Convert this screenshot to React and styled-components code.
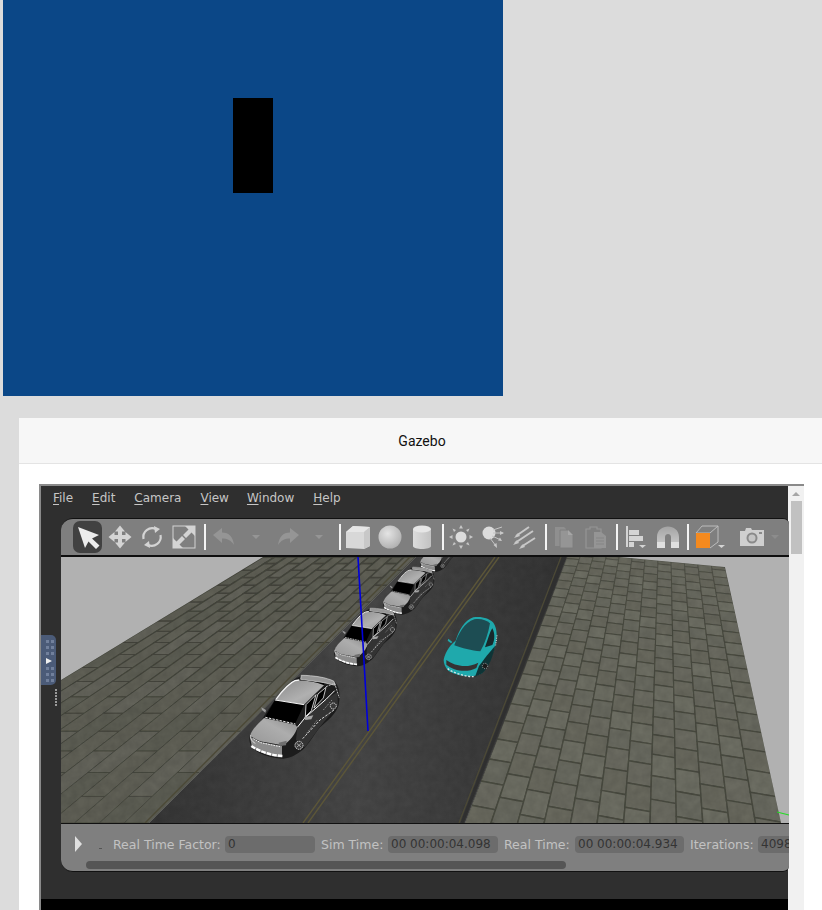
import React from 'react';
import styled, { createGlobalStyle } from 'styled-components';

const GlobalStyle = createGlobalStyle`
  html, body {
    margin: 0;
    padding: 0;
    background: #dcdcdc;
    overflow: hidden;
  }
  #root {
    width: 822px;
    height: 910px;
    overflow: hidden;
  }
`;

const Page = styled.div`
  width: 822px;
  height: 910px;
  overflow: hidden;
  background: #dcdcdc;
`;

const VideoBox = styled.div`
  width: 500px;
  height: 396px;
  margin-left: 3px;
  background: #0b4787;
  display: flex;
  justify-content: center;
  padding-top: 98px;
  box-sizing: border-box;
`;

const VideoMark = styled.div`
  width: 40px;
  height: 95px;
  background: #000;
`;

const Modal = styled.div`
  width: 806px;
  margin: 22px 0 0 19px;
  background: #fff;
  border-radius: 3px 0 0 0;
`;

const ModalHeader = styled.div`
  height: 45px;
  display: flex;
  align-items: center;
  justify-content: center;
  background: #f7f7f7;
  border-bottom: 1px solid #e4e4e4;
  font: 14px Roboto, "Liberation Sans", sans-serif;
  color: #111;
`;

const ModalBody = styled.div`
  padding: 20px 0 0 20px;
  height: 470px;
  box-sizing: border-box;
`;

const GazeboWindow = styled.div`
  position: relative;
  width: 765px;
  height: 450px;
  box-sizing: border-box;
  border-top: 2px solid #8a8a8a;
  border-left: 2px solid #8a8a8a;
  display: flex;
  font-family: "DejaVu Sans", sans-serif;
`;

const Desktop = styled.div`
  width: 747px;
  flex: none;
  background: #2f2f2f;
`;

const MenuBar = styled.div`
  height: 32px;
  display: flex;
  align-items: center;
  padding: 0 0 8px 12px;
  box-sizing: border-box;
  font-size: 12px;
  color: #c6c6c6;
`;

const MenuItem = styled.span`
  margin-right: ${props => props.$gap}px;
  u {
    text-underline-offset: 2px;
  }
`;

const Panel = styled.div`
  width: 728px;
  margin-left: 20px;
  position: relative;
  z-index: 1;
  margin-right: -1px;
`;

const Toolbar = styled.div`
  height: 39px;
  box-sizing: border-box;
  display: flex;
  align-items: center;
  padding-left: 12px;
  background: #7f7f7f;
  border-top: 1px solid #111;
  border-bottom: 2px solid #0e0e0e;
  border-radius: 12px 6px 0 0;
`;

const SelectButton = styled.div`
  width: 29px;
  height: 32px;
  margin-right: 2px;
  display: flex;
  align-items: center;
  justify-content: center;
  background: #414141;
  border-radius: 7px;
`;

const Slot = styled.div`
  width: ${props => props.$w}px;
  flex: none;
  display: flex;
  align-items: center;
  justify-content: center;
`;

const Separator = styled.div`
  width: 2px;
  height: 26px;
  flex: none;
  margin: 0 ${props => props.$r ?? 2}px 0 ${props => props.$l ?? 4}px;
  background: #f4f4f4;
`;

const Scene = styled.div`
  height: 266px;
  overflow: hidden;
  svg {
    display: block;
  }
`;

const StatusBar = styled.div`
  height: 49px;
  box-sizing: border-box;
  background: #7f7f7f;
  border-top: 1px solid #111;
  border-bottom: 1px solid #111;
  border-radius: 0 0 6px 12px;
  overflow: hidden;
`;

const StatusRow = styled.div`
  height: 37px;
  padding: 3px 0 0 14px;
  box-sizing: border-box;
  display: flex;
  align-items: center;
  font-size: 12.5px;
  color: #c2c2c2;
  white-space: nowrap;
`;

const PlayArrow = styled.div`
  width: 0;
  height: 0;
  flex: none;
  border-left: 7px solid #e0e0e0;
  border-top: 8px solid transparent;
  border-bottom: 8px solid transparent;
`;

const TinyDot = styled.div`
  width: 3px;
  height: 1px;
  flex: none;
  margin: 9px 11px 0 17px;
  background: #555;
`;

const StatusLabel = styled.span`
  flex: none;
  width: ${props => props.$w}px;
`;

const StatusValue = styled.div`
  width: ${props => props.$w}px;
  height: 17px;
  flex: none;
  margin: 0 6px 0 ${props => props.$l}px;
  padding-left: 3px;
  box-sizing: border-box;
  line-height: 17px;
  font-size: 12px;
  background: #6c6c6c;
  border-radius: 4px;
  color: #343434;
`;

const HScroll = styled.div`
  width: 480px;
  height: 8px;
  margin-left: 25px;
  background: #555;
  border-radius: 4px;
`;

const BlackStrip = styled.div`
  height: 30px;
  margin-top: 27px;
  background: #000;
`;

const ScrollTrack = styled.div`
  width: 16px;
  flex: none;
  background: #f1f1f1;
  position: relative;
  z-index: 0;
  display: flex;
  flex-direction: column;
  align-items: center;
  padding-top: 6px;
  box-sizing: border-box;
`;

const ScrollUp = styled.div`
  width: 0;
  height: 0;
  border-left: 4px solid transparent;
  border-right: 4px solid transparent;
  border-bottom: 4px solid #a6a6a6;
`;

const ScrollThumb = styled.div`
  width: 11px;
  height: 53px;
  margin-top: 5px;
  background: #c1c1c1;
`;

const SideTab = styled.div`
  position: absolute;
  left: 0;
  top: 149px;
  width: 15px;
  height: 50px;
  box-sizing: border-box;
  padding: 5px 0 0 5px;
  background: #4b5b78;
  border-radius: 0 5px 5px 0;
  display: grid;
  grid-template-columns: 3px 3px;
  grid-auto-rows: min-content;
  column-gap: 2px;
  row-gap: 3px;
  z-index: 2;
`;

const TabDot = styled.i`
  height: 3px;
  background: #71809c;
`;

const TabArrow = styled.i`
  grid-column: span 2;
  width: 0;
  height: 0;
  border-left: 6px solid #f0f0f0;
  border-top: 3px solid transparent;
  border-bottom: 3px solid transparent;
`;

const Grip = styled.div`
  position: absolute;
  left: 14px;
  top: 203px;
  width: 2px;
  height: 18px;
  background: repeating-linear-gradient(#9a9a9a 0 2px, transparent 2px 3px);
  z-index: 2;
`;

/* maps the unit square on a four point quad, the way the ground looks in the camera */
const homography = ([p0, p1, p2, p3]) => {
  const dx1 = p1[0] - p2[0];
  const dx2 = p3[0] - p2[0];
  const sx = p0[0] - p1[0] + p2[0] - p3[0];
  const dy1 = p1[1] - p2[1];
  const dy2 = p3[1] - p2[1];
  const sy = p0[1] - p1[1] + p2[1] - p3[1];
  const den = dx1 * dy2 - dx2 * dy1;
  const g = (sx * dy2 - dx2 * sy) / den;
  const h = (dx1 * sy - sx * dy1) / den;
  const a = p1[0] - p0[0] + g * p1[0];
  const b = p3[0] - p0[0] + h * p3[0];
  const d = p1[1] - p0[1] + g * p1[1];
  const e = p3[1] - p0[1] + h * p3[1];
  return (u, v) => {
    const w = g * u + h * v + 1;
    return [(a * u + b * v + p0[0]) / w, (d * u + e * v + p0[1]) / w];
  };
};

const Bricks = ({ quad, cols, rows, tones, joint, clipId }) => {
  const map = homography(quad);
  const items = [];
  for (let i = 0; i < cols; i++) {
    const shift = i % 2 ? 0.5 : 0;
    for (let k = -1; k < rows; k++) {
      const v0 = Math.max(0, (k + shift) / rows);
      const v1 = Math.min(1, (k + 1 + shift) / rows);
      if (v1 <= v0) continue;
      const pts = [map(i / cols, v0), map((i + 1) / cols, v0), map((i + 1) / cols, v1), map(i / cols, v1)];
      const tone = tones[(i * 7 + (k + 1) * 13) % tones.length];
      items.push(
        <polygon
          key={`${i}-${k}`}
          points={pts.map(p => `${p[0].toFixed(1)},${p[1].toFixed(1)}`).join(' ')}
          fill={tone}
          stroke={joint}
          strokeWidth={0.7 + v1 * 0.8}
        />
      );
    }
  }
  return <g clipPath={`url(#${clipId})`}><g filter="url(#soft)">{items}</g></g>;
};

const GreyCar = ({ x, y, s }) => (
  <g transform={`translate(${x} ${y}) scale(${s})`}>
    <path d="M28 205 C32 185 55 165 65 150 C80 125 100 95 120 72 C140 45 160 25 190 15 C225 15 265 22 285 35 C298 50 302 75 296 105 C290 130 260 155 240 172 C225 190 205 225 190 238 C170 255 150 265 130 266 C100 265 60 255 38 235 C30 225 28 215 28 205 Z" fill="#1c1c1c" />
    <path d="M172 172 L196 142 L258 88 L292 66 L294 105 L240 170 L195 232 L168 210 Z" fill="#333" />
    <path d="M184 16 C220 16 260 22 282 34 L286 46 L252 38 L182 28 Z" fill="#969696" stroke="#dcdcdc" strokeWidth="2" />
    <path d="M180 30 L252 40 L250 46 L176 36 Z" fill="#000" />
    <path d="M108 90 C125 65 145 40 165 32 C195 30 230 36 252 46 C235 62 212 85 192 104 Z" fill="url(#carRoof)" />
    <path d="M108 88 C125 65 145 40 165 32 L178 30" fill="none" stroke="#f6f6f6" strokeWidth="4" />
    <path d="M105 90 L192 104 L166 160 L76 140 Z" fill="#000" />
    <path d="M105 90 L192 104" fill="none" stroke="#f6f6f6" strokeWidth="3" />
    <path d="M76 142 L166 162" fill="none" stroke="#ececec" strokeWidth="3" strokeDasharray="7 4" />
    <path d="M72 144 L166 164 L172 172 C168 190 150 215 128 226 L60 214 L30 198 C34 180 55 160 72 144 Z" fill="url(#carHood)" />
    <path d="M30 200 L62 216 L126 228 L126 262 C100 262 60 250 36 232 Z" fill="#8c8c8c" />
    <path d="M34 228 C60 246 95 256 128 258" fill="none" stroke="#fff" strokeWidth="7" strokeDasharray="14 3" />
    <path d="M40 206 L62 218 L120 230" fill="none" stroke="#f0f0f0" strokeWidth="3" strokeDasharray="5 3" />
    <path d="M32 196 C30 205 36 215 46 220" fill="none" stroke="#ddd" strokeWidth="3" />
    <path d="M198 104 L228 74 L214 122 L196 140 Z" fill="#000" stroke="#e6e6e6" strokeWidth="2.5" />
    <path d="M234 72 L258 52 L250 84 L222 114 Z" fill="#000" stroke="#e6e6e6" strokeWidth="2.5" />
    <path d="M172 172 L196 142 L258 88 L284 62" fill="none" stroke="#fff" strokeWidth="3" />
    <path d="M188 206 L240 150 L282 120" fill="none" stroke="#eee" strokeWidth="2.5" strokeDasharray="8 4" />
    <path d="M200 190 L232 150 M250 120 L276 90" fill="none" stroke="#bbb" strokeWidth="2" strokeDasharray="5 4" />
    <path d="M192 142 L220 136 L214 148 L196 150 Z" fill="#a4a4a4" />
    <path d="M64 112 L78 120 L76 128 L66 120 Z" fill="#9c9c9c" />
    <circle cx="177" cy="226" r="12" fill="#3a3a3a" stroke="#dcdcdc" strokeWidth="3" strokeDasharray="4 2" />
    <path d="M170 220 L184 232 M184 220 L170 232" stroke="#ddd" strokeWidth="2" />
    <circle cx="280" cy="108" r="9" fill="#3a3a3a" stroke="#dcdcdc" strokeWidth="3" strokeDasharray="4 2" />
    <path d="M258 50 L284 40 L298 84" fill="none" stroke="#d8d8d8" strokeWidth="2.5" strokeDasharray="6 3" />
    <path d="M116 218 L140 212 L138 226 L118 228 Z" fill="#6f6f6f" />
  </g>
);

const TealCar = () => (
  <g transform="translate(374 53) scale(0.3333)">
    <path d="M26 150 C30 125 50 100 62 92 C72 60 88 32 115 22 C140 18 165 26 175 38 C188 55 188 90 178 115 C170 140 158 175 140 190 C120 205 70 200 40 182 C30 172 26 160 26 150 Z" fill="#1fa9ac" />
    <path d="M58 106 C70 70 88 38 118 28 C135 24 155 30 165 40 C160 70 150 100 136 124 C110 122 80 115 58 106 Z" fill="#1d4d53" />
    <path d="M150 112 C158 90 165 65 172 55 C180 70 180 90 172 105 Z" fill="#17282b" />
    <path d="M132 168 C145 150 165 125 180 108 C176 135 160 175 142 190 L120 200 Z" fill="#0f3436" />
    <path d="M34 150 C60 168 95 176 130 158 L124 174 C95 190 55 182 34 164 Z" fill="#353233" />
    <path d="M38 176 C58 190 90 200 116 200" fill="none" stroke="#d8e4e4" strokeWidth="4" strokeDasharray="6 5" />
    <path d="M40 86 L52 96 L48 100 L38 92 Z" fill="#1fa9ac" />
    <circle cx="150" cy="168" r="8" fill="#1b1b1b" stroke="#e4e4e4" strokeWidth="2" strokeDasharray="3 3" />
    <path d="M186 76 L182 106" fill="none" stroke="#e4e4e4" strokeWidth="3" strokeDasharray="3 4" />
  </g>
);

const GroundScene = () => {
  const ox = 61;
  const oy = 557;
  const q = pts => pts.map(([x, y]) => [x - ox, y - oy]);
  const leftQuad = q([[-174, 823], [149, 823], [416, 557], [263, 557]]);
  const rightQuad = q([[569, 552], [725, 567], [799, 900], [461, 832]]);
  const leftPoints = leftQuad.map(p => p.join(',')).join(' ');
  return (
    <svg width="728" height="266" viewBox="0 0 728 266">
      <defs>
        <linearGradient id="roadTone" x1="0" y1="0" x2="1" y2="0">
          <stop offset="0" stopColor="#363636" />
          <stop offset="0.5" stopColor="#474747" />
          <stop offset="1" stopColor="#343434" />
        </linearGradient>
        <linearGradient id="carRoof" x1="0" y1="0" x2="1" y2="1">
          <stop offset="0" stopColor="#8a8a8a" />
          <stop offset="0.6" stopColor="#b0b0b0" />
          <stop offset="1" stopColor="#949494" />
        </linearGradient>
        <linearGradient id="carHood" x1="0" y1="1" x2="1" y2="0">
          <stop offset="0" stopColor="#969696" />
          <stop offset="0.6" stopColor="#adadad" />
          <stop offset="1" stopColor="#8a8a8a" />
        </linearGradient>
        <clipPath id="leftGround">
          <polygon points={leftPoints} />
        </clipPath>
        <clipPath id="rightGround">
          <polygon points="506,-5 664,10 720,266 404,266" />
        </clipPath>
        <clipPath id="allGround">
          <polygon points={leftPoints} />
          <polygon points="355,0 506,0 404,266 88,266" />
          <polygon points="506,-5 664,10 720,266 404,266" />
        </clipPath>
        <filter id="soft" x="-5%" y="-5%" width="110%" height="110%">
          <feGaussianBlur stdDeviation="0.45" />
        </filter>
        <filter id="grain" x="0" y="0" width="100%" height="100%">
          <feTurbulence type="fractalNoise" baseFrequency="0.12" numOctaves="3" seed="4" />
          <feColorMatrix values="0 0 0 0 0  0 0 0 0 0  0 0 0 0 0  0.9 0 0 0 -0.2" />
        </filter>
      </defs>
      <rect width="728" height="266" fill="#b1b1b1" />
      <Bricks quad={leftQuad} cols={13} rows={10} tones={['#606156', '#5c5d52', '#63645a', '#5e5f54']} joint="#44453c" clipId="leftGround" />
      <Bricks quad={rightQuad} cols={12} rows={21} tones={['#6a6b60', '#67685d', '#6d6e63', '#68695e']} joint="#4a4b41" clipId="rightGround" />
      <polygon points="355,0 506,0 404,266 88,266" fill="url(#roadTone)" />
      <g clipPath="url(#allGround)">
        <rect width="728" height="266" filter="url(#grain)" opacity="0.16" />
      </g>
      <path d="M349 0 L84 266" stroke="#4c4937" strokeWidth="1.4" fill="none" />
      <path d="M503 0 L401 266" stroke="#2f2f2f" strokeWidth="3" fill="none" />
      <path d="M500 0 L398 266" stroke="#4d4a36" strokeWidth="1.2" fill="none" />
      <path d="M434 0 L242 266" stroke="#5c5638" strokeWidth="1.4" fill="none" />
      <path d="M438 0 L247 266" stroke="#5c5638" strokeWidth="1.4" fill="none" />
      <GreyCar x={355} y={-25} s={0.15} />
      <GreyCar x={316.7} y={7.1} s={0.19} />
      <GreyCar x={266.5} y={47.5} s={0.232} />
      <GreyCar x={179} y={113} s={0.3333} />
      <TealCar />
      <path d="M297 0 L307 174" stroke="#0000dc" strokeWidth="1.6" fill="none" />
      <path d="M716 255 L728 258" stroke="#22dd22" strokeWidth="1.2" fill="none" />
    </svg>
  );
};

const Icon = ({ w = 24, h = 24, children }) => (
  <svg width={w} height={h} viewBox={`0 0 ${w} ${h}`}>{children}</svg>
);

const LIGHT = '#d4d4d4';
const DIM = '#959595';

const MiniDown = ({ color = DIM }) => (
  <Icon w={8} h={5}><path d="M0 0 H8 L4 4 Z" fill={color} /></Icon>
);

const toolIcons = {
  select: (
    <Icon><path d="M2 2 L23 10 L16 13.500 L23.500 20.500 L20 24 L12.500 16.500 L9 23 Z" fill="#ececec" /></Icon>
  ),
  move: (
    <Icon><path d="M12 0.500 L17 6.500 H14 V10 H17.500 V7 L23.500 12 L17.500 17 V14 H14 V17.500 H17 L12 23.500 L7 17.500 H10 V14 H6.500 V17 L0.500 12 L6.500 7 V10 H10 V6.500 H7 Z" fill={LIGHT} /></Icon>
  ),
  rotate: (
    <Icon>
      <path d="M3.500 14 A9 9 0 0 1 16 4" fill="none" stroke={LIGHT} strokeWidth="2.2" />
      <path d="M20.500 10 A9 9 0 0 1 8 20" fill="none" stroke={LIGHT} strokeWidth="2.2" />
      <path d="M14 1 L20 4 L15 8 Z M10 23 L4 20 L9 16 Z" fill={LIGHT} />
    </Icon>
  ),
  scale: (
    <Icon>
      <rect x="1" y="1" width="22" height="22" fill="none" stroke={LIGHT} strokeWidth="1" />
      <path d="M13 1 H23 V11 L19.500 7.500 L14 13 L11 10 L16.500 4.500 Z M11 23 H1 V13 L4.500 16.500 L10 11 L13 14 L7.500 19.500 Z" fill={LIGHT} />
    </Icon>
  ),
  undo: (
    <Icon><path d="M1 10 L10 3 V7.500 C17 7.500 21 12 22 20 C19 15 15 13.500 10 13.500 V18 Z" fill={DIM} /></Icon>
  ),
  redo: (
    <Icon><path d="M23 10 L14 3 V7.500 C7 7.500 3 12 2 20 C5 15 9 13.500 14 13.500 V18 Z" fill={DIM} /></Icon>
  ),
  box: (
    <Icon>
      <path d="M0 7 L7 1 L24 2 V21 L18 24 L0 23 Z" fill="#d8d8d8" />
      <path d="M0 7 L7 1 L24 2 L18 7 Z" fill="#e6e6e6" />
      <path d="M18 7 L24 2 V21 L18 24 Z" fill="#c8c8c8" />
    </Icon>
  ),
  sphere: (
    <Icon>
      <defs>
        <radialGradient id="sphereFill" cx="0.4" cy="0.35" r="0.75">
          <stop offset="0" stopColor="#e4e4e4" />
          <stop offset="1" stopColor="#ababab" />
        </radialGradient>
      </defs>
      <circle cx="12" cy="12" r="11.500" fill="url(#sphereFill)" />
    </Icon>
  ),
  cylinder: (
    <Icon>
      <defs>
        <linearGradient id="cylFill" x1="0" y1="0" x2="1" y2="0">
          <stop offset="0" stopColor="#dcdcdc" />
          <stop offset="1" stopColor="#c2c2c2" />
        </linearGradient>
      </defs>
      <path d="M3 4 V21 C3 25 21 25 21 21 V4 Z" fill="url(#cylFill)" />
      <ellipse cx="12" cy="4" rx="9" ry="3.500" fill="#e6e6e6" />
    </Icon>
  ),
  sun: (
    <Icon>
      <circle cx="12" cy="12" r="5.500" fill="#dcdcdc" />
      <path d="M12 0 L14 3.500 H10 Z M12 24 L14 20.500 H10 Z M0 12 L3.500 10 V14 Z M24 12 L20.500 10 V14 Z M3.500 3.500 L7 5 L5 7 Z M20.500 3.500 L17 5 L19 7 Z M3.500 20.500 L7 19 L5 17 Z M20.500 20.500 L17 19 L19 17 Z" fill="#c8c8c8" />
    </Icon>
  ),
  point: (
    <Icon>
      <circle cx="8" cy="8" r="6.500" fill="#dcdcdc" />
      <path d="M12 8 L22 8 M11 11 L20 15 M9 13 L15 21 M12 5 L21 2" stroke="#c4c4c4" strokeWidth="1" fill="none" />
      <path d="M23 8 L19 6 V10 Z M21 16 L17 15.500 L19 12.500 Z M16 23 L12.500 20 L15.500 18 Z" fill="#c8c8c8" />
    </Icon>
  ),
  directional: (
    <Icon>
      <path d="M3 11 L16 2 M2 18 L20 6 M8 22 L22 13" stroke="#c8c8c8" strokeWidth="2" fill="none" />
      <path d="M1 13 L5 8 L7 11 Z M0 20 L4 15 L6 18 Z M6 24 L10 19 L12 22 Z" fill="#c8c8c8" />
    </Icon>
  ),
  copy: (
    <Icon>
      <path d="M3 2 H12 L14 4 V21 H3 Z" fill="#8f8f8f" />
      <path d="M8 5 H16 L21 10 V23 H8 Z" fill={DIM} stroke="#7f7f7f" strokeWidth="1" />
      <path d="M16 5 V10 H21 Z" fill="#a6a6a6" />
    </Icon>
  ),
  paste: (
    <Icon>
      <path d="M2 4 H6 V2 H13 V4 H17 V23 H2 Z" fill="none" stroke={DIM} strokeWidth="1.200" />
      <path d="M10 7 H17 L22 11 V23 H10 Z" fill={DIM} />
      <path d="M12 13 H20 M12 16 H20 M12 19 H20" stroke="#858585" strokeWidth="1" />
    </Icon>
  ),
  align: (
    <Icon>
      <rect x="3" y="1" width="2" height="21" fill={LIGHT} />
      <rect x="6" y="5" width="10" height="5" fill={LIGHT} />
      <rect x="6" y="11" width="14" height="5" fill={LIGHT} />
      <rect x="6" y="17" width="5" height="5" fill={LIGHT} />
      <path d="M16 20 H23 L19.500 23 Z" fill={LIGHT} />
    </Icon>
  ),
  magnet: (
    <Icon>
      <defs>
        <linearGradient id="magnetFill" x1="0" y1="0" x2="0" y2="1">
          <stop offset="0" stopColor="#a4a4a4" />
          <stop offset="1" stopColor="#cfcfcf" />
        </linearGradient>
      </defs>
      <path d="M1 23 V12 C1 -2 23 -2 23 12 V23 H15 V12 C15 8 9 8 9 12 V23 Z" fill="url(#magnetFill)" />
      <path d="M1 23 V17 H9 V23 Z M15 23 V17 H23 V23 Z" fill="#e0e0e0" />
    </Icon>
  ),
  cube: (
    <Icon w={36} h={24}>
      <path d="M12 1 H28 V17 L20 23 M28 1 L20 8" fill="none" stroke="#bdbdbd" strokeWidth="1" />
      <path d="M6 8 L12 1 M6 8 H20" stroke="#b8b8b8" strokeWidth="1" fill="none" />
      <rect x="6" y="8" width="14" height="15" fill="#f58a1f" />
      <path d="M28 20 H35 L31.500 23 Z" fill={LIGHT} />
    </Icon>
  ),
  camera: (
    <Icon>
      <path d="M0 6 H5 L6 3 H11 L12 5 H24 V21 H0 Z" fill="#cfcfcf" />
      <circle cx="12" cy="13" r="5.500" fill="#8a8a8a" />
      <circle cx="12" cy="13" r="3.500" fill="#c4c4c4" />
      <rect x="19" y="7" width="3" height="2" fill="#8a8a8a" />
    </Icon>
  ),
};

const menus = [
  { label: 'File', gap: 19 },
  { label: 'Edit', gap: 19 },
  { label: 'Camera', gap: 19 },
  { label: 'View', gap: 18 },
  { label: 'Window', gap: 19 },
  { label: 'Help', gap: 0 },
];

const App = () => (
  <Page>
    <GlobalStyle />
    <VideoBox>
      <VideoMark />
    </VideoBox>
    <Modal>
      <ModalHeader>Gazebo</ModalHeader>
      <ModalBody>
        <GazeboWindow>
          <Desktop>
            <MenuBar>
              {menus.map(m => (
                <MenuItem key={m.label} $gap={m.gap}>
                  <u>{m.label[0]}</u>{m.label.slice(1)}
                </MenuItem>
              ))}
            </MenuBar>
            <Panel>
              <Toolbar>
                <SelectButton>{toolIcons.select}</SelectButton>
                <Slot $w={32}>{toolIcons.move}</Slot>
                <Slot $w={32}>{toolIcons.rotate}</Slot>
                <Slot $w={32}>{toolIcons.scale}</Slot>
                <Separator />
                <Slot $w={32}>{toolIcons.undo}</Slot>
                <Slot $w={32}><MiniDown /></Slot>
                <Slot $w={32}>{toolIcons.redo}</Slot>
                <Slot $w={30}><MiniDown /></Slot>
                <Separator $l={5} $r={1} />
                <Slot $w={32}>{toolIcons.box}</Slot>
                <Slot $w={32}>{toolIcons.sphere}</Slot>
                <Slot $w={32}>{toolIcons.cylinder}</Slot>
                <Separator $l={4} $r={1} />
                <Slot $w={32}>{toolIcons.sun}</Slot>
                <Slot $w={31}>{toolIcons.point}</Slot>
                <Slot $w={33}>{toolIcons.directional}</Slot>
                <Separator $l={4} $r={1} />
                <Slot $w={32}>{toolIcons.copy}</Slot>
                <Slot $w={32}>{toolIcons.paste}</Slot>
                <Separator $l={4} $r={1} />
                <Slot $w={32}>{toolIcons.align}</Slot>
                <Slot $w={34}>{toolIcons.magnet}</Slot>
                <Separator $l={2} $r={1} />
                <Slot $w={36}>{toolIcons.cube}</Slot>
                <Slot $w={10} />
                <Slot $w={32}>{toolIcons.camera}</Slot>
                <Slot $w={14}><MiniDown color="#8c8c8c" /></Slot>
              </Toolbar>
              <Scene>
                <GroundScene />
              </Scene>
              <StatusBar>
                <StatusRow>
                  <PlayArrow />
                  <TinyDot />
                  <StatusLabel $w={105}>Real Time Factor:</StatusLabel>
                  <StatusValue $l={7} $w={90}>0</StatusValue>
                  <StatusLabel $w={60}>Sim Time:</StatusLabel>
                  <StatusValue $l={7} $w={110}>00 00:00:04.098</StatusValue>
                  <StatusLabel $w={65}>Real Time:</StatusLabel>
                  <StatusValue $l={6} $w={109}>00 00:00:04.934</StatusValue>
                  <StatusLabel $w={61}>Iterations:</StatusLabel>
                  <StatusValue $l={7} $w={60}>4098</StatusValue>
                </StatusRow>
                <HScroll />
              </StatusBar>
            </Panel>
            <BlackStrip />
          </Desktop>
          <ScrollTrack>
            <ScrollUp />
            <ScrollThumb />
          </ScrollTrack>
          <SideTab>
            {[0, 1, 2, 3, 4, 5].map(i => <TabDot key={`a${i}`} />)}
            <TabArrow />
            {[0, 1, 2, 3, 4, 5].map(i => <TabDot key={`b${i}`} />)}
          </SideTab>
          <Grip />
        </GazeboWindow>
      </ModalBody>
    </Modal>
  </Page>
);

export default App;
